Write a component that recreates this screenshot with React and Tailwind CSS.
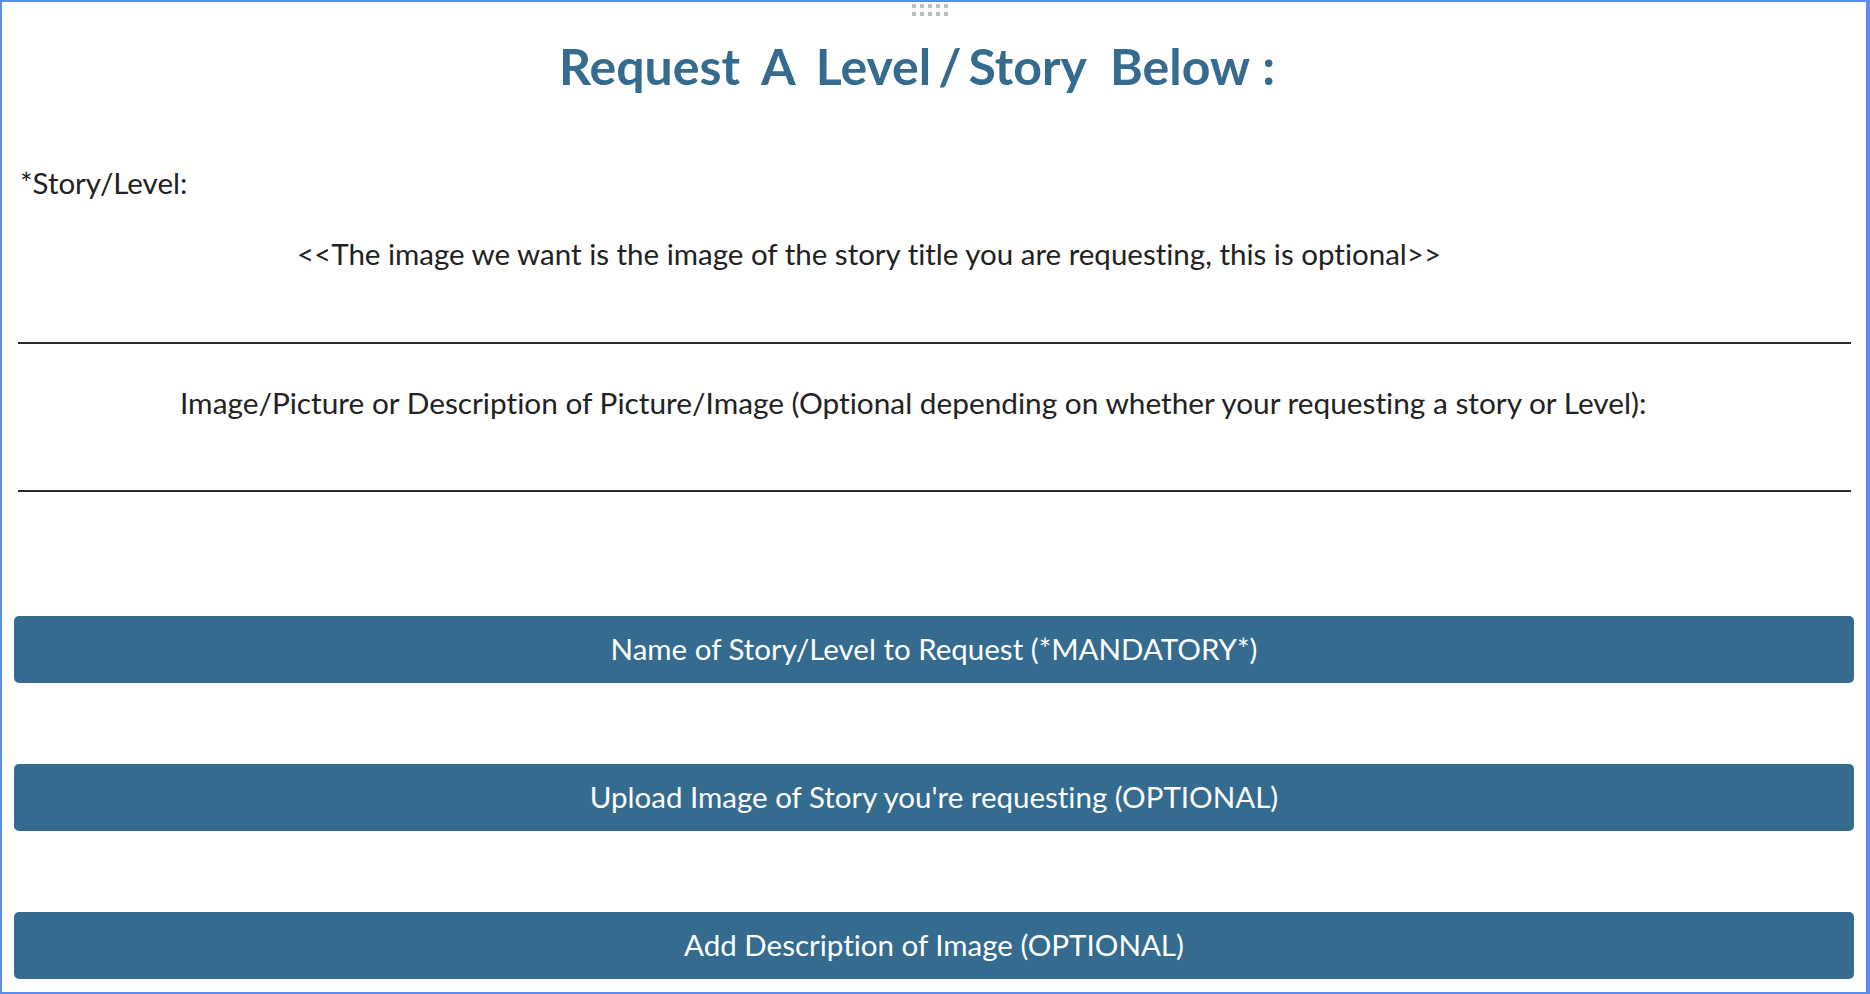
function DragHandle() {
  const dots = [0, 1, 2, 3, 4];
  return (
    <div className="absolute left-[910px] top-[2px] flex flex-col gap-[4px]">
      {[0, 1].map((r) => (
        <div key={r} className="flex gap-[4px]">
          {dots.map((d) => (
            <span key={d} className="block w-[4px] h-[4px] bg-[#bdbdbd]" />
          ))}
        </div>
      ))}
    </div>
  );
}

function RequestButton({ children }) {
  return (
    <button className="w-full h-[67px] rounded-[5px] bg-[#346b8f] text-white text-[29.5px] leading-[1.2] text-center">
      {children}
    </button>
  );
}

function App() {
  return (
    <div className="relative h-[994px] bg-white border-t-2 border-l-2 border-b-2 border-r-4 border-[#5b8def] font-['Lato','Liberation_Sans',sans-serif] text-[#222] [font-variant-ligatures:none]">
      <DragHandle />

      <h1 className="pt-[34px] pr-[34px] flex justify-center text-[50px] font-bold leading-[1.2] text-[#346b8f]">
        <span>Request</span>
        <span className="ml-[21px]">A</span>
        <span className="ml-[20px]">Level</span>
        <span className="ml-[7px]">/</span>
        <span className="ml-[7px]">Story</span>
        <span className="ml-[23px]">Below</span>
        <span className="ml-[12px]">:</span>
      </h1>

      <p className="mt-[69px] pl-[18px] text-[29.5px] leading-[1.2]">*Story/Level:</p>

      <p className="mt-[36px] pl-[295px] text-[29.5px] leading-[1.2]">
        &lt;&lt;The image we want is the image of the story title you are requesting, this is optional&gt;&gt;
      </p>

      <div className="mt-[70px] ml-[16px] mr-[15px] h-[2px] bg-[#2a2a2a]" />

      <p className="mt-[41px] pl-[178px] text-[29.8px] leading-[1.2]">
        Image/Picture or Description of Picture/Image (Optional depending on whether your requesting a story or Level):
      </p>

      <div className="mt-[69px] ml-[16px] mr-[15px] h-[2px] bg-[#2a2a2a]" />

      <div className="mt-[124px] mx-[12px] flex flex-col gap-[81px]">
        <RequestButton>Name of Story/Level to Request (*MANDATORY*)</RequestButton>
        <RequestButton>Upload Image of Story you're requesting (OPTIONAL)</RequestButton>
        <RequestButton>Add Description of Image (OPTIONAL)</RequestButton>
      </div>
    </div>
  );
}

export default App;
